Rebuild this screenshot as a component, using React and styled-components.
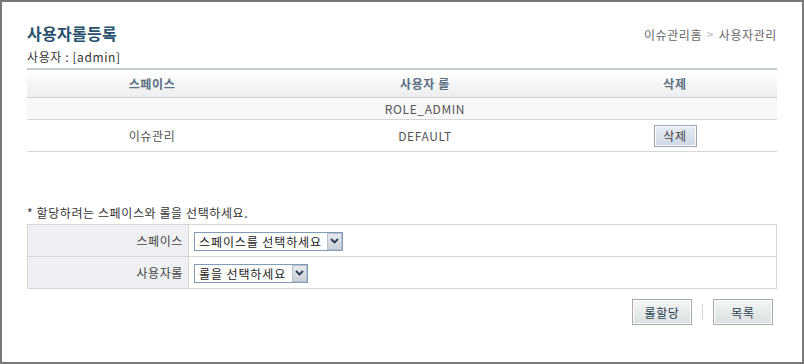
import React from 'react'
import styled, { createGlobalStyle } from 'styled-components'

const GlobalStyle = createGlobalStyle`
  html, body {
    margin: 0;
    padding: 0;
    background: #fff;
  }
  body {
    font-family: "Noto Sans CJK KR", "Noto Sans", sans-serif;
    font-size: 12px;
    letter-spacing: 0.6px;
    color: #555;
  }
`

const Frame = styled.div`
  box-sizing: border-box;
  width: 804px;
  height: 364px;
  border: 2px solid #787878;
  padding: 19px 25px 0 25px;
`

const TitleBar = styled.div`
  display: flex;
  justify-content: space-between;
  align-items: center;
  height: 24px;

  h1 {
    margin: 0;
    font-size: 16px;
    font-weight: bold;
    color: #264f6d;
    letter-spacing: 0.3px;
  }
`

const Breadcrumb = styled.div`
  font-size: 12px;
  color: #666;
  display: flex;
  align-items: center;
  gap: 5px;
  margin-top: 2px;

  .arrow {
    color: #aaa;
    font-size: 11px;
  }
`

const UserLine = styled.div`
  font-size: 12px;
  color: #333;
  line-height: 14px;
  margin: 5px 0 4px;
`

const ListTable = styled.table`
  width: 750px;
  border-collapse: collapse;
  table-layout: fixed;
  border-top: 2px solid #c3cbd3;

  th {
    height: 27px;
    padding: 0;
    font-weight: bold;
    font-size: 12px;
    color: #5b6f82;
    background: linear-gradient(#ffffff, #eceeef);
    border-bottom: 1px solid #cfd2d4;
  }

  td {
    padding: 0;
    text-align: center;
    color: #555;
    border-bottom: 1px solid #d6d6d6;
  }
`

const Row = styled.tr`
  height: ${p => p.$h}px;
  background: ${p => (p.$shade ? '#f8f8f8' : '#fff')};
`

const SmallButton = styled.button`
  font-family: inherit;
  font-size: 12px;
  letter-spacing: 0.6px;
  color: #444;
  width: 43px;
  height: 22px;
  padding: 0;
  border: 1px solid #9aa5b1;
  box-shadow: inset 0 0 0 1px #fff;
  background: linear-gradient(#e9eef5, #cdd7e4);
  cursor: pointer;
`

const Note = styled.p`
  margin: 54px 0 4px;
  font-size: 12px;
  color: #333;
  line-height: 14px;
`

const FormTable = styled.table`
  width: 750px;
  border-collapse: collapse;
  table-layout: fixed;

  th, td {
    height: 31px;
    padding: 0;
    border: 1px solid #d6d6d6;
  }

  th {
    width: 161px;
    box-sizing: border-box;
    text-align: right;
    padding-right: 5px;
    font-weight: normal;
    color: #444;
    background: #eef0f3;
  }

  td {
    padding-left: 5px;
  }
`

const SelectWrap = styled.span`
  position: relative;
  display: inline-block;
  vertical-align: middle;
`

const Select = styled.select`
  appearance: none;
  -webkit-appearance: none;
  display: block;
  font-family: inherit;
  font-size: 12px;
  letter-spacing: 0.9px;
  height: 19px;
  line-height: 17px;
  color: #222;
  border: 1px solid #7f9db9;
  border-radius: 0;
  background: #fff;
  padding: 0 20px 0 4px;
`

const Arrow = styled.span`
  position: absolute;
  top: 1px;
  right: 1px;
  bottom: 1px;
  width: 15px;
  box-sizing: border-box;
  border: 1px solid #b7bfcc;
  background: linear-gradient(#e6e9ef, #c9cfd9);
  display: flex;
  align-items: center;
  justify-content: center;
  pointer-events: none;
`

const Actions = styled.div`
  display: flex;
  justify-content: flex-end;
  align-items: center;
  margin-top: 10px;
  padding-right: 4px;
`

const ActionButton = styled.button`
  font-family: inherit;
  font-size: 12px;
  letter-spacing: 0.6px;
  color: #2a4050;
  width: 60px;
  height: 26px;
  padding: 0;
  border: 1px solid #a9a9a9;
  box-shadow: inset 0 0 0 1px #fff;
  background: linear-gradient(#f4f6f6, #d9dfe0);
  cursor: pointer;
`

const Divider = styled.span`
  display: inline-block;
  height: 16px;
  margin: 0 10px;
  border-left: 1px dotted #bbb;
`

const Dropdown = ({ placeholder }) => (
  <SelectWrap>
    <Select defaultValue="">
      <option value="">{placeholder}</option>
    </Select>
    <Arrow>
      <svg width="9" height="6" viewBox="0 0 9 6">
        <path d="M1 1 L4.5 4.5 L8 1" fill="none" stroke="#2b3a55" strokeWidth="1.8" />
      </svg>
    </Arrow>
  </SelectWrap>
)

const App = () => {
  const rows = [
    { space: '', role: 'ROLE_ADMIN', del: false },
    { space: '이슈관리', role: 'DEFAULT', del: true },
  ]

  return (
    <>
      <GlobalStyle />
      <Frame>
        <TitleBar>
          <h1>사용자롤등록</h1>
          <Breadcrumb>
            <span>이슈관리홈</span>
            <span className="arrow">&gt;</span>
            <span>사용자관리</span>
          </Breadcrumb>
        </TitleBar>
        <UserLine>사용자 : [admin]</UserLine>

        <ListTable>
          <colgroup>
            <col style={{ width: 250 }} />
            <col style={{ width: 296 }} />
            <col />
          </colgroup>
          <thead>
            <tr>
              <th>스페이스</th>
              <th>사용자 롤</th>
              <th>삭제</th>
            </tr>
          </thead>
          <tbody>
            {rows.map((r, idx) => (
              <Row key={idx} $shade={!r.del} $h={r.del ? 32 : 22}>
                <td>{r.space}</td>
                <td>{r.role}</td>
                <td>{r.del && <SmallButton type="button">삭제</SmallButton>}</td>
              </Row>
            ))}
          </tbody>
        </ListTable>

        <Note>* 할당하려는 스페이스와 롤을 선택하세요.</Note>
        <FormTable>
          <tbody>
            <tr>
              <th>스페이스</th>
              <td>
                <Dropdown placeholder="스페이스를 선택하세요" />
              </td>
            </tr>
            <tr>
              <th>사용자롤</th>
              <td>
                <Dropdown placeholder="롤을 선택하세요" />
              </td>
            </tr>
          </tbody>
        </FormTable>

        <Actions>
          <ActionButton type="button">롤할당</ActionButton>
          <Divider />
          <ActionButton type="button">목록</ActionButton>
        </Actions>
      </Frame>
    </>
  )
}

export default App
